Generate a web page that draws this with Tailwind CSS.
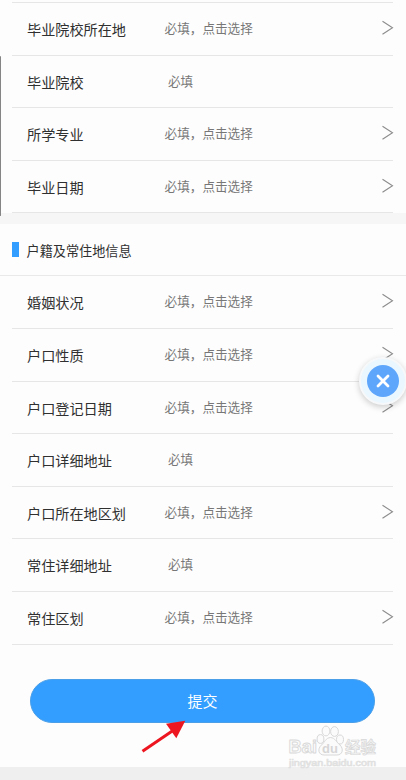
<!DOCTYPE html>
<html lang="zh-CN">
<head>
<meta charset="utf-8">
<title>户籍及常住地信息</title>
<script src="https://cdn.jsdelivr.net/npm/@tailwindcss/browser@4"></script>
</head>
<body class="bg-[#fdfdfd]">
<svg class="hidden"><symbol id="chev" viewBox="0 0 12 16"><path d="M.5 1.2 10.500 7.8.5 14.3" fill="none" stroke="#8c8c8c" stroke-width="1.1"/></symbol></svg>
<main class="relative flex h-[780px] w-[406px] flex-col overflow-hidden bg-[#fdfdfd] font-['Noto_Sans_CJK_SC',sans-serif] text-[14.15px] text-[#303030]">
  <div class="ml-3 mr-[13px] mt-[2px] h-px shrink-0 bg-[#e6e6e6]"></div>
  <section class="ml-3 mr-[12px] shrink-0">
    <div class="mr-px flex h-[52.6px] items-center border-b border-[#e6e6e6] pl-[15px]"><span class="w-[137.6px] pt-[1.6px]">毕业院校所在地</span><span class="flex-1 text-[12.6px] text-[#777]">必填，点击选择</span><svg class="-mr-px mb-[2px] h-4 w-3"><use href="#chev"/></svg></div>
    <div class="mr-px flex h-[52.6px] items-center border-b border-[#e6e6e6] pl-[15px]"><span class="w-[141px] pt-[1.6px]">毕业院校</span><span class="flex-1 text-[12.6px] text-[#777]">必填</span></div>
    <div class="mr-px flex h-[52.6px] items-center border-b border-[#e6e6e6] pl-[15px]"><span class="w-[137.6px] pt-[1.6px]">所学专业</span><span class="flex-1 pb-px text-[12.6px] text-[#777]">必填，点击选择</span><svg class="-mr-px mb-[2px] h-4 w-3"><use href="#chev"/></svg></div>
    <div class="mr-px flex h-[52.6px] items-center border-b border-[#e6e6e6] pl-[15px]"><span class="w-[137.6px] pt-[1.6px]">毕业日期</span><span class="flex-1 text-[12.6px] text-[#777]">必填，点击选择</span><svg class="-mr-px mb-[2px] h-4 w-3"><use href="#chev"/></svg></div>
  </section>
  <div class="h-[10.6px] shrink-0 bg-[#f6f6f6]"></div>
  <header class="flex h-[52.4px] shrink-0 items-center border-b border-[#e9e9e9] pl-3 text-[13.15px]"><i class="mr-[7.5px] h-[15px] w-[7px] bg-[#339eff]"></i><span class="pt-[2px]">户籍及常住地信息</span></header>
  <section class="ml-3 mr-[12px] shrink-0">
    <div class="mr-px flex h-[52.6px] items-center border-b border-[#e6e6e6] pl-[15px]"><span class="w-[137.6px] pt-[1.6px]">婚姻状况</span><span class="flex-1 pb-px text-[12.6px] text-[#777]">必填，点击选择</span><svg class="-mr-px mb-[2px] h-4 w-3"><use href="#chev"/></svg></div>
    <div class="mr-px flex h-[52.6px] items-center border-b border-[#e6e6e6] pl-[15px]"><span class="w-[137.6px] pt-[1.6px]">户口性质</span><span class="flex-1 text-[12.6px] text-[#777]">必填，点击选择</span><svg class="-mr-px mb-[2px] h-4 w-3"><use href="#chev"/></svg></div>
    <div class="mr-px flex h-[52.6px] items-center border-b border-[#e6e6e6] pl-[15px]"><span class="w-[137.6px] pt-[1.6px]">户口登记日期</span><span class="flex-1 text-[12.6px] text-[#777]">必填，点击选择</span><svg class="-mr-px mb-[2px] h-4 w-3"><use href="#chev"/></svg></div>
    <div class="mr-px flex h-[52.6px] items-center border-b border-[#e6e6e6] pl-[15px]"><span class="w-[141px] pt-[1.6px]">户口详细地址</span><span class="flex-1 text-[12.6px] text-[#777]">必填</span></div>
    <div class="mr-px flex h-[52.6px] items-center border-b border-[#e6e6e6] pl-[15px]"><span class="w-[137.6px] pt-[1.6px]">户口所在地区划</span><span class="flex-1 text-[12.6px] text-[#777]">必填，点击选择</span><svg class="-mr-px mb-[2px] h-4 w-3"><use href="#chev"/></svg></div>
    <div class="mr-px flex h-[52.6px] items-center border-b border-[#e6e6e6] pl-[15px]"><span class="w-[141px] pt-[1.6px]">常住详细地址</span><span class="flex-1 pb-px text-[12.6px] text-[#777]">必填</span></div>
    <div class="mr-px flex h-[52.6px] items-center border-b border-[#e6e6e6] pl-[15px]"><span class="w-[137.6px] pt-[1.6px]">常住区划</span><span class="flex-1 text-[12.6px] text-[#777]">必填，点击选择</span><svg class="-mr-px mb-[2px] h-4 w-3"><use href="#chev"/></svg></div>
  </section>
  <button class="ml-[30px] mt-[34px] flex h-[44px] w-[345px] shrink-0 items-center justify-center rounded-full border border-[#4b9fe8] bg-[#339eff] pt-[2px] text-[15px] text-white">提交</button>
  <div class="mt-auto h-[13px] shrink-0 bg-[#efefef]"></div>

  <!-- scroll indicator -->
  <div class="absolute left-0 top-[56px] h-[160px] w-px rounded-full bg-[#858585]"></div>
  <!-- floating close button -->
  <div class="absolute left-[359px] top-[357px] flex size-[48px] items-center justify-center rounded-full border-2 border-[#f6f8f9] bg-[#eaf7ff] shadow-[0_2px_6px_rgba(0,0,0,0.2)]">
    <div class="flex size-8 items-center justify-center rounded-full bg-[#5ea6fb]"><svg class="size-[14px]" viewBox="0 0 14 14"><path d="M2 2 12 12M12 2 2 12" stroke="#fff" stroke-width="2.8" stroke-linecap="round"/></svg></div>
  </div>
  <!-- pointer arrow -->
  <svg class="absolute left-[140px] top-[718px] h-[36px] w-[48px]" viewBox="0 0 48 36"><path d="M2.5 33.3 33 12.500" stroke="#ed1620" stroke-width="3"/><path d="M45.300 2.800 26 5.800 36.300 20.300Z" fill="#ed1620"/></svg>
  <!-- watermark -->
  <svg class="absolute left-[284px] top-[722px] h-[50px] w-[100px]" viewBox="0 0 100 50" fill="#fbfbfb" stroke="#d8d8d8" stroke-width="1" stroke-linejoin="round">
    <text x="4.500" y="31" font-size="18.500" font-weight="bold" textLength="28.500" lengthAdjust="spacingAndGlyphs" font-family="Liberation Sans" stroke-width=".9">Bai</text>
    <text x="61" y="30.500" font-size="15.500" font-weight="bold" textLength="31" font-family="Noto Sans CJK SC" fill="#f3f3f3" stroke-width=".7">经验</text>
    <text x="5" y="43.500" font-size="9.500" textLength="87" lengthAdjust="spacingAndGlyphs" font-family="Liberation Sans" fill="#f6f6f6" stroke-width=".7" stroke="#e0e0e0">jingyan.baidu.com</text>
    <ellipse cx="36.500" cy="17" rx="3.400" ry="4.400"/><ellipse cx="42" cy="9" rx="3.900" ry="4.900"/><ellipse cx="50.500" cy="9.500" rx="3.900" ry="4.900"/><ellipse cx="56" cy="17.500" rx="3.500" ry="4.500"/>
    <path d="M46.500 15.500C41.500 16 41 20 37.500 23C33 27 34.500 33 40 33H53C58.500 33 60 27 56 23C52 20 51.500 16 46.500 15.500Z"/>
    <text x="38" y="30.500" font-size="13" font-weight="bold" font-family="Liberation Sans" fill="#d6d6d6" stroke="none">du</text>
  </svg>
</main>
</body>
</html>
